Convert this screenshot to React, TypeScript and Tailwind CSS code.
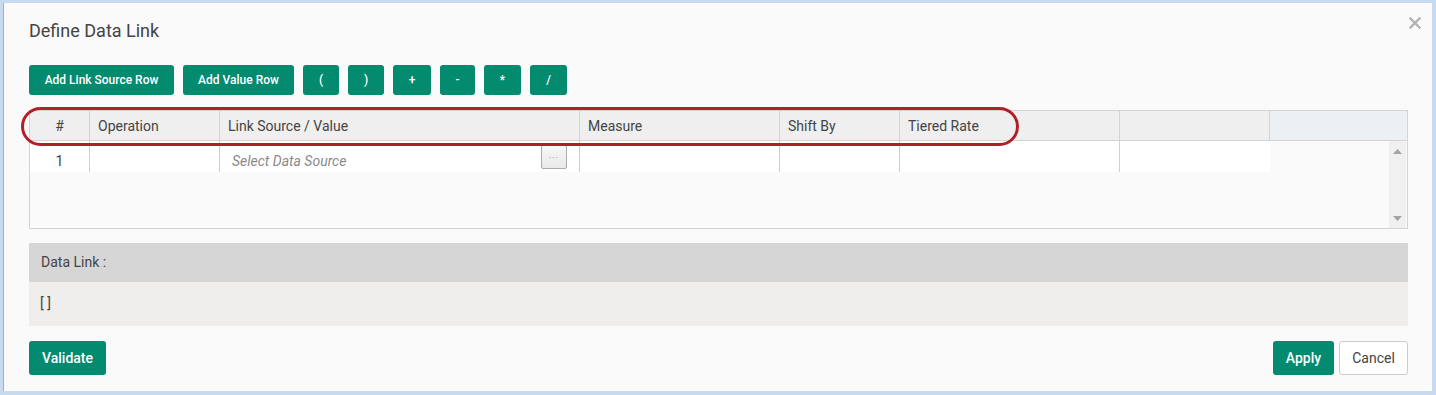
import React from "react";

const cols = [
  { label: "#", w: "w-[60px]", center: true },
  { label: "Operation", w: "w-[130px]" },
  { label: "Link Source / Value", w: "w-[360px]" },
  { label: "Measure", w: "w-[200px]" },
  { label: "Shift By", w: "w-[120px]" },
  { label: "Tiered Rate", w: "w-[220px]" },
  { label: "", w: "w-[150px]" },
];

const ops = [
  { label: "(", w: "w-[36px]" },
  { label: ")", w: "w-[36px]" },
  { label: "+", w: "w-[38px]" },
  { label: "-", w: "w-[35px]" },
  { label: "*", w: "w-[37px]" },
  { label: "/", w: "w-[37px]" },
];

export default function App() {
  const greenBtn = "h-[30px] rounded-[3px] bg-[#038a6f] text-white text-[12px] font-medium flex items-center justify-center";

  return (
    <div className="w-[1436px] h-[395px] bg-[#c8daf0] pt-[3px] pl-[3px] overflow-hidden" style={{ fontFamily: "Roboto, 'Liberation Sans', sans-serif" }}>
      <div className="relative w-[1429px] h-[388px] bg-[#fafafa] border-l border-[#a9adb3] pt-[17px] pl-[25px] pr-[24px]">
        <button className="absolute right-[11px] top-[13px] w-[13px] h-[13px] flex items-center justify-center">
          <svg width="12" height="12" viewBox="0 0 12 12">
            <path d="M1.5 1.5 L10.5 10.5 M10.5 1.5 L1.5 10.5" stroke="#b3b3b3" strokeWidth="2.4" strokeLinecap="square" />
          </svg>
        </button>

        <h1 className="text-[18px] leading-[21px] text-[#444]">Define Data Link</h1>

        <div className="mt-[24px] flex gap-[9px]">
          <button className={`${greenBtn} w-[145px]`}>Add Link Source Row</button>
          <button className={`${greenBtn} w-[111px]`}>Add Value Row</button>
          {ops.map((o) => (
            <button key={o.label} className={`${greenBtn} ${o.w}`}>
              {o.label}
            </button>
          ))}
        </div>

        <div className="relative mt-[15px] w-[1379px] border border-[#d3d3d3]">
          <div className="flex h-[30px] bg-[#efefef] border-b border-[#d3d3d3]">
            {cols.map((c, i) => (
              <div
                key={i}
                className={`${c.w} shrink-0 flex items-center pt-[1px] border-r border-[#d3d3d3] text-[14px] text-[#444] ${c.center ? "justify-center" : "pl-[8px]"}`}
              >
                {c.label}
              </div>
            ))}
            <div className="flex-1 bg-[#edf0f2]" />
          </div>

          <div className="flex h-[87px]">
            <div className="flex-1">
              <div className="flex h-[31px] w-[1240px] bg-white">
                {cols.map((c, i) => (
                  <div
                    key={i}
                    className={`${c.w} shrink-0 flex items-center text-[14px] ${i < cols.length - 1 ? "border-r border-[#cfcfcf]" : ""} ${c.center ? "justify-center text-[#444] pt-[9px]" : "pl-[12px]"}`}
                  >
                    {i === 0 && "1"}
                    {i === 2 && (
                      <div className="flex w-full items-center justify-between pr-[12px]">
                        <span className="italic text-[#8a8a8a] pt-[9px]">Select Data Source</span>
                        <span className="w-[26px] h-[24px] rounded-[2px] border border-[#ababab] bg-gradient-to-b from-[#f7f7f7] to-[#e9e9e9] flex items-center justify-center text-[9px] leading-none text-[#888] tracking-[1px] pb-[2px]">
                          ...
                        </span>
                      </div>
                    )}
                  </div>
                ))}
              </div>
            </div>
            <div className="w-[17px] mr-[1px] bg-[#f0f0f0] flex flex-col items-center justify-between pt-[8px] pb-[7px]">
              <svg width="9" height="5" viewBox="0 0 9 5">
                <path d="M0 5 L4.5 0 L9 5 Z" fill="#a3a3a3" />
              </svg>
              <svg width="9" height="5" viewBox="0 0 9 5">
                <path d="M0 0 L9 0 L4.5 5 Z" fill="#a3a3a3" />
              </svg>
            </div>
          </div>

          <div className="absolute left-[-9px] top-[-4px] w-[998px] h-[39px] rounded-full border-[3px] border-[#b31f29] pointer-events-none" />
        </div>

        <div className="mt-[14px] w-[1379px]">
          <div className="h-[39px] bg-[#d6d6d6] flex items-center pl-[12px] text-[14px] text-[#444]">Data Link :</div>
          <div className="h-[44px] bg-[#efeeec] flex items-center pl-[11px] text-[14px] text-[#444] pb-[2px]">[ ]</div>
        </div>

        <div className="mt-[15px] w-[1379px] flex items-center justify-between">
          <button className="h-[34px] w-[77px] rounded-[3px] bg-[#038a6f] text-white text-[14px] font-medium">Validate</button>
          <div className="flex gap-[5px]">
            <button className="h-[34px] w-[61px] rounded-[3px] bg-[#038a6f] text-white text-[14px] font-medium">Apply</button>
            <button className="h-[34px] w-[69px] rounded-[3px] bg-white border border-[#cccccc] text-[#444] text-[14px]">Cancel</button>
          </div>
        </div>
      </div>
    </div>
  );
}
